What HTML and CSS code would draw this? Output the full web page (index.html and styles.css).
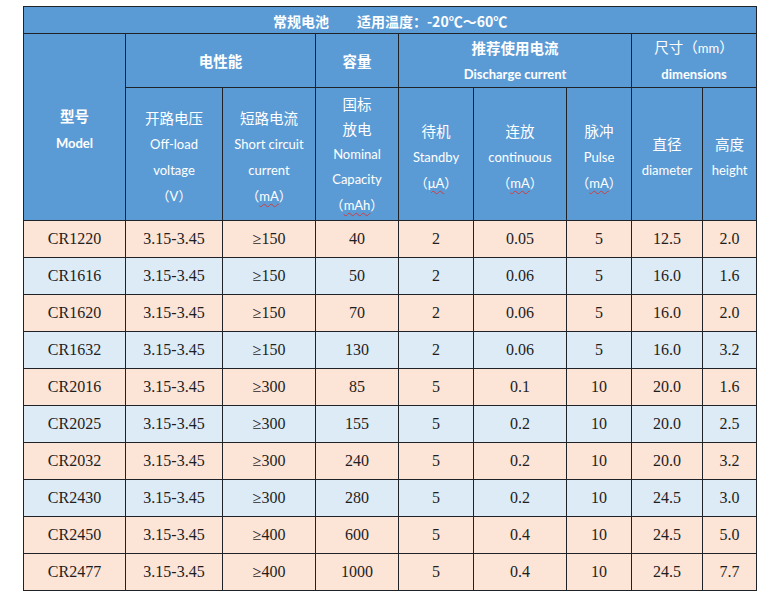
FILE: index.html
```html
<!DOCTYPE html>
<html lang="zh">
<head>
<meta charset="utf-8">
<title>常规电池</title>
<link rel="stylesheet" href="styles.css">
</head>
<body>
<table class="spec">
  <colgroup>
    <col class="w-model"><col class="w-volt"><col class="w-short"><col class="w-cap">
    <col class="w-stby"><col class="w-cont"><col class="w-pulse"><col class="w-dia"><col class="w-h">
  </colgroup>
  <thead>
    <tr class="r-title">
      <th colspan="9" class="title"><span>常规电池</span><span class="gap">适用温度：-20℃～60℃</span></th>
    </tr>
    <tr class="r-group">
      <th rowspan="2" class="model"><div class="zh b">型号</div><div class="en b">Model</div></th>
      <th colspan="2" class="zh b">电性能</th>
      <th class="zh b">容量</th>
      <th colspan="3"><div class="zh b">推荐使用电流</div><div class="en b">Discharge current</div></th>
      <th colspan="2"><div class="zh">尺寸（<span class="en">mm</span>）</div><div class="en b">dimensions</div></th>
    </tr>
    <tr class="r-sub">
      <th><div class="zh">开路电压</div><div class="en">Off-load</div><div class="en">voltage</div><div class="en">（V）</div></th>
      <th><div class="zh">短路电流</div><div class="en">Short circuit</div><div class="en">current</div><div class="en">（<span class="sq">mA</span>）</div></th>
      <th class="cap"><div class="zh">国标</div><div class="zh">放电</div><div class="en">Nominal</div><div class="en">Capacity</div><div class="en">（<span class="sq">mAh</span>）</div></th>
      <th><div class="zh">待机</div><div class="en">Standby</div><div class="en">（<span class="sq">μA</span>）</div></th>
      <th><div class="zh">连放</div><div class="en">continuous</div><div class="en">（<span class="sq">mA</span>）</div></th>
      <th><div class="zh">脉冲</div><div class="en">Pulse</div><div class="en">（<span class="sq">mA</span>）</div></th>
      <th><div class="zh">直径</div><div class="en">diameter</div></th>
      <th><div class="zh">高度</div><div class="en">height</div></th>
    </tr>
  </thead>
  <tbody>
    <tr class="odd"><td>CR1220</td><td>3.15-3.45</td><td>≥150</td><td>40</td><td>2</td><td>0.05</td><td>5</td><td>12.5</td><td>2.0</td></tr>
    <tr class="even"><td>CR1616</td><td>3.15-3.45</td><td>≥150</td><td>50</td><td>2</td><td>0.06</td><td>5</td><td>16.0</td><td>1.6</td></tr>
    <tr class="odd"><td>CR1620</td><td>3.15-3.45</td><td>≥150</td><td>70</td><td>2</td><td>0.06</td><td>5</td><td>16.0</td><td>2.0</td></tr>
    <tr class="even"><td>CR1632</td><td>3.15-3.45</td><td>≥150</td><td>130</td><td>2</td><td>0.06</td><td>5</td><td>16.0</td><td>3.2</td></tr>
    <tr class="odd"><td>CR2016</td><td>3.15-3.45</td><td>≥300</td><td>85</td><td>5</td><td>0.1</td><td>10</td><td>20.0</td><td>1.6</td></tr>
    <tr class="even"><td>CR2025</td><td>3.15-3.45</td><td>≥300</td><td>155</td><td>5</td><td>0.2</td><td>10</td><td>20.0</td><td>2.5</td></tr>
    <tr class="odd"><td>CR2032</td><td>3.15-3.45</td><td>≥300</td><td>240</td><td>5</td><td>0.2</td><td>10</td><td>20.0</td><td>3.2</td></tr>
    <tr class="even"><td>CR2430</td><td>3.15-3.45</td><td>≥300</td><td>280</td><td>5</td><td>0.2</td><td>10</td><td>24.5</td><td>3.0</td></tr>
    <tr class="odd"><td>CR2450</td><td>3.15-3.45</td><td>≥400</td><td>600</td><td>5</td><td>0.4</td><td>10</td><td>24.5</td><td>5.0</td></tr>
    <tr class="odd"><td>CR2477</td><td>3.15-3.45</td><td>≥400</td><td>1000</td><td>5</td><td>0.4</td><td>10</td><td>24.5</td><td>7.7</td></tr>
  </tbody>
</table>
</body>
</html>
```

FILE: styles.css
```css
html, body {
  margin: 0;
  padding: 0;
  background: #ffffff;
}
body {
  padding: 6px 0 0 23px;
}
.spec {
  border-collapse: collapse;
  table-layout: fixed;
  width: 733px;
  font-family: "Liberation Serif", "Noto Sans CJK SC", serif;
}
.w-model { width: 102px; }
.w-volt { width: 97px; }
.w-short { width: 93px; }
.w-cap { width: 83px; }
.w-stby { width: 75px; }
.w-cont { width: 93px; }
.w-pulse { width: 65px; }
.w-dia { width: 71px; }
.w-h { width: 54px; }

.spec th, .spec td {
  border: 1px solid #1f2328;
  padding: 0;
  text-align: center;
  vertical-align: middle;
}
.spec th {
  background: #5b9bd5;
  color: #ffffff;
  font-weight: normal;
  font-family: Lato, "Noto Sans CJK SC", sans-serif;
}
.r-title { height: 27px; }
.r-group { height: 54px; }
.r-sub { height: 133px; }

.spec th.title {
  font-family: "Noto Sans CJK SC", sans-serif;
  font-size: 14px;
  font-weight: bold;
  line-height: 24px;
  padding-top: 1px;
}
.title .gap { margin-left: 28px; }

.spec .zh {
  font-family: "Noto Sans CJK SC", sans-serif;
  font-size: 14.5px;
  line-height: 26px;
}
.spec .en {
  font-family: Lato, "Noto Sans CJK SC", sans-serif;
  font-size: 13px;
  line-height: 26px;
}
.spec .b { font-weight: bold; }
.spec .r-sub th { padding-top: 5px; }
.spec .r-sub th.cap { padding-top: 1px; }
.spec .cap .zh, .spec .cap .en { line-height: 25.5px; }
.spec th.model { padding-top: 6px; }
.spec .model .en { line-height: 28px; }

.sq {
  text-decoration: underline wavy #d23c3c;
  text-decoration-thickness: 1px;
  text-underline-offset: 2px;
}

.spec td {
  font-size: 16px;
  color: #1e1e1e;
  height: 36px;
}
.odd td { background: #fce4d6; }
.even td { background: #ddebf7; }
```
